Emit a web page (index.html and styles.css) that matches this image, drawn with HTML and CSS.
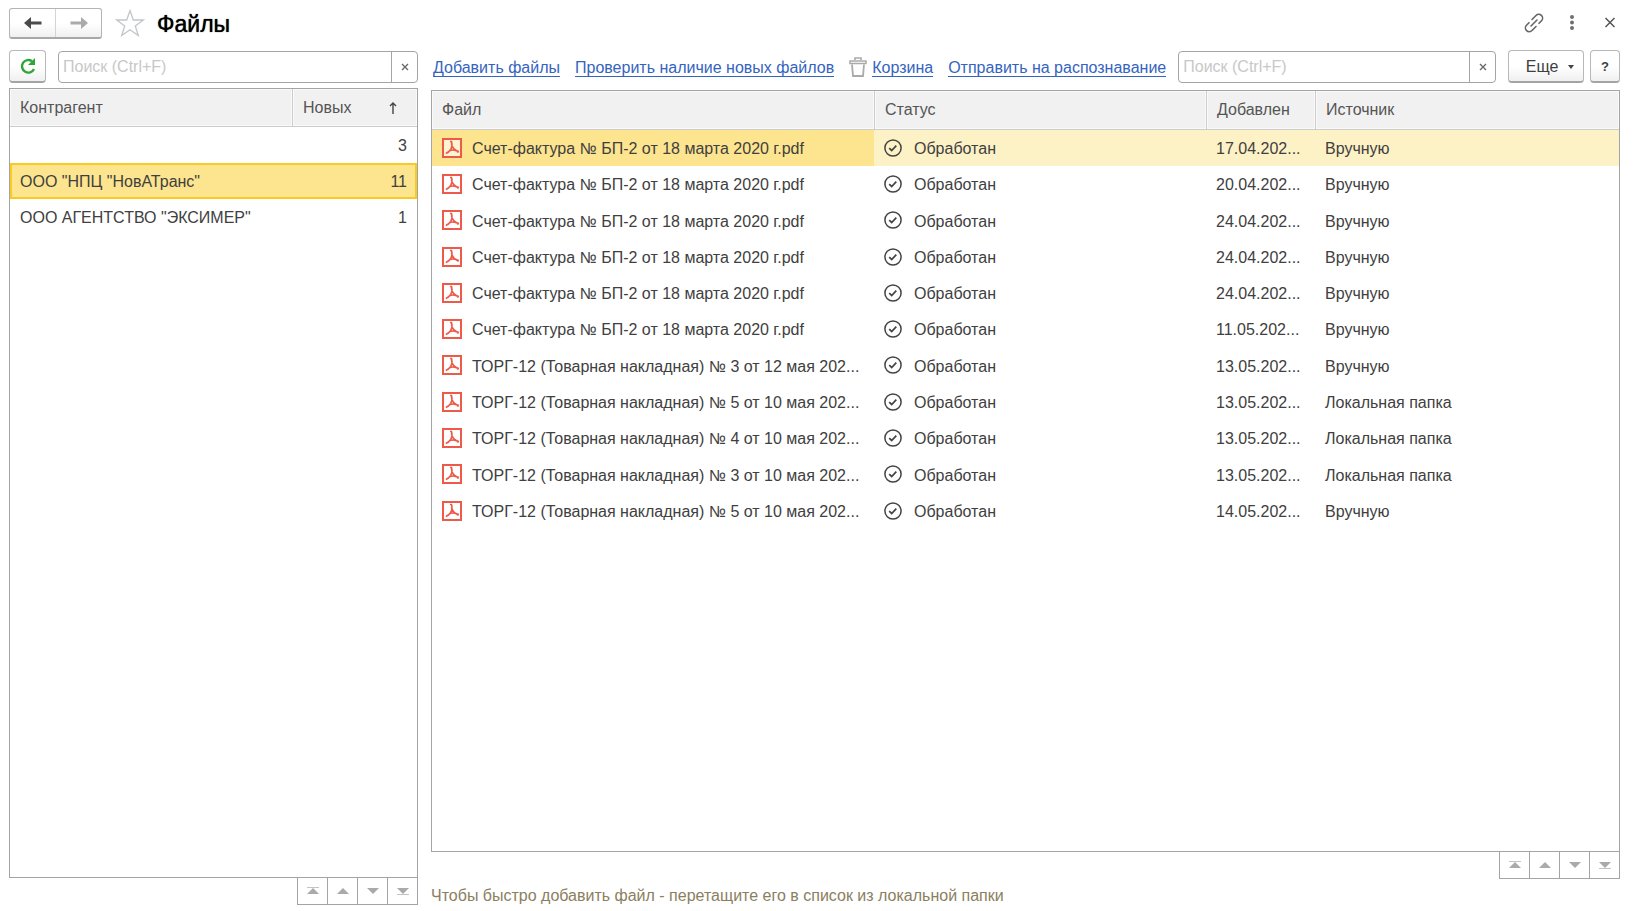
FILE: index.html
```html
<!DOCTYPE html>
<html lang="ru">
<head>
<meta charset="utf-8">
<title>Файлы</title>
<link rel="stylesheet" href="styles.css">
</head>
<body>
<svg class="sprite" aria-hidden="true">
  <symbol id="pdf" viewBox="0 0 20 20"><path d="M1 1h18v18H1z" fill="#fff" fill-opacity=".6" stroke="#ee5a4a" stroke-width="2"/><path d="M8 3.500h1.500c.8 3 .7 5.500-.8 8-1.200 1.700-2.700 3.200-4.900 4M9.500 6c.8 4 3 6.800 7.500 7.500M7.500 12.800c3-1.300 6-1.300 9 1.700" fill="none" stroke="#ee5a4a" stroke-width="1.600"/></symbol>
  <symbol id="done" viewBox="0 0 18 18"><circle cx="9" cy="9" r="8.100" fill="none" stroke="#444" stroke-width="1.500"/><path d="M5.200 9.200l2.500 2.300 4.600-4.800" fill="none" stroke="#444" stroke-width="1.700"/></symbol>
  <symbol id="first" viewBox="0 0 12 8"><path d="M0 0h12v1H0z" fill-opacity=".7"/><path d="M6 1l6 6H0z"/></symbol>
  <symbol id="up" viewBox="0 0 12 8"><path d="M6 1l6 6H0z"/></symbol>
  <symbol id="down" viewBox="0 0 12 8"><path d="M0 1h12L6 7z"/></symbol>
  <symbol id="last" viewBox="0 0 12 8"><path d="M0 7h12v1H0z" fill-opacity=".7"/><path d="M0 1h12L6 7z"/></symbol>
  <symbol id="cross" viewBox="0 0 8 8"><path d="M1 1l6 6M7 1L1 7" fill="none" stroke="#666" stroke-width="1.300"/></symbol>
</svg>
<main class="page">
  <header class="titlebar">
    <div class="history">
      <button type="button" aria-label="Назад"><svg width="18" height="12" viewBox="0 0 18 12"><path d="M0 6l7-6v4.500h10.500v3H7V12z" fill="#4a4a4a"/></svg></button>
      <button type="button" aria-label="Вперед"><svg width="18" height="12" viewBox="0 0 18 12"><path d="M18 6l-7-6v4.500H.5v3H11V12z" fill="#aaa"/></svg></button>
    </div>
    <button type="button" class="star" aria-label="В избранное"><svg width="30" height="28" viewBox="0 0 30 28"><path d="M15 1.500l3.300 9.500h10L20.300 17l3 9.500L15 20.700 6.700 26.500l3-9.500L1.700 11h10z" fill="#fff" stroke="#c0c6cb" stroke-width="1.300"/></svg></button>
    <h1>Файлы</h1>
    <div class="window-tools">
      <button type="button" aria-label="Ссылка"><svg width="20" height="20" viewBox="0 0 20 20" fill="none" stroke="#666" stroke-width="1.600" stroke-linecap="round"><path d="M8 6.500l4-4a3.700 3.700 0 0 1 5.500 5.300L15 10.300M12 13.500l-4 4a3.700 3.700 0 0 1-5.500-5.300L5 9.700M7 13l6-6"/></svg></button>
      <button type="button" aria-label="Меню"><svg width="20" height="20" viewBox="0 0 20 20" fill="#707070"><circle cx="10" cy="4" r="2"/><circle cx="10" cy="9.500" r="2"/><circle cx="10" cy="15" r="2"/></svg></button>
      <button type="button" aria-label="Закрыть"><svg width="20" height="20" viewBox="0 0 20 20"><path d="M5.500 5l9 9M14.500 5l-9 9" stroke="#555" stroke-width="1.500"/></svg></button>
    </div>
  </header>
  <div class="columns">
    <section class="contractors">
      <div class="toolbar">
        <button type="button" class="button refresh" aria-label="Обновить"><svg width="18" height="18" viewBox="0 0 18 18"><path d="M15 12A6.300 6.300 0 1 1 13 4.200" fill="none" stroke="#2fa63a" stroke-width="2.400"/><path d="M16 1v7H9z" fill="#2fa63a"/></svg></button>
        <div class="search"><input type="text" placeholder="Поиск (Ctrl+F)" aria-label="Поиск контрагента"><button type="button" aria-label="Очистить"><svg width="8" height="8"><use href="#cross"/></svg></button></div>
      </div>
      <div class="panel">
        <table class="list">
          <colgroup><col><col class="col-new"></colgroup>
          <thead><tr><th>Контрагент</th><th><span class="sorted">Новых <svg width="8" height="12" viewBox="0 0 8 12"><path d="M4 12V1.500M1 4l3-3 3 3" fill="none" stroke="#444" stroke-width="1.400"/></svg></span></th></tr></thead>
          <tbody>
            <tr><td></td><td class="num">3</td></tr>
            <tr class="current"><td>ООО "НПЦ "НовАТранс"</td><td class="num">11</td></tr>
            <tr><td>ООО АГЕНТСТВО "ЭКСИМЕР"</td><td class="num">1</td></tr>
          </tbody>
        </table>
      </div>
      <div class="pager">
        <button type="button" aria-label="В начало"><svg width="12" height="8"><use href="#first"/></svg></button>
        <button type="button" aria-label="Вверх"><svg width="12" height="8"><use href="#up"/></svg></button>
        <button type="button" aria-label="Вниз"><svg width="12" height="8"><use href="#down"/></svg></button>
        <button type="button" aria-label="В конец"><svg width="12" height="8"><use href="#last"/></svg></button>
      </div>
    </section>
    <section class="files">
      <div class="toolbar">
        <nav class="links">
          <a href="#add">Добавить файлы</a>
          <a href="#check">Проверить наличие новых файлов</a>
          <span class="trash"><svg width="18" height="20" viewBox="0 0 18 20" fill="none" stroke="#aaa"><path d="M6 3V1h6v2" stroke-width="1.600"/><path d="M1 4h16v2.500H1z" stroke-width="1.500"/><path d="M3 7.500l1 11.500h10l1-11.500" stroke-width="1.800"/></svg><a href="#trash">Корзина</a></span>
          <a href="#send">Отправить на распознавание</a>
        </nav>
        <div class="search"><input type="text" placeholder="Поиск (Ctrl+F)" aria-label="Поиск файла"><button type="button" aria-label="Очистить"><svg width="8" height="8"><use href="#cross"/></svg></button></div>
        <button type="button" class="button more">Еще <svg width="6" height="4" viewBox="0 0 6 4"><path d="M0 0h6L3 4z" fill="#444"/></svg></button>
        <button type="button" class="button help">?</button>
      </div>
      <div class="panel">
        <table class="list documents">
          <colgroup><col class="col-file"><col class="col-status"><col class="col-added"><col></colgroup>
          <thead><tr><th>Файл</th><th>Статус</th><th>Добавлен</th><th>Источник</th></tr></thead>
          <tbody></tbody>
        </table>
      </div>
      <div class="pager">
        <button type="button" aria-label="В начало"><svg width="12" height="8"><use href="#first"/></svg></button>
        <button type="button" aria-label="Вверх"><svg width="12" height="8"><use href="#up"/></svg></button>
        <button type="button" aria-label="Вниз"><svg width="12" height="8"><use href="#down"/></svg></button>
        <button type="button" aria-label="В конец"><svg width="12" height="8"><use href="#last"/></svg></button>
      </div>
      <p class="hint">Чтобы быстро добавить файл - перетащите его в список из локальной папки</p>
    </section>
  </div>
</main>
<script src="rows.js"></script>
</body>
</html>
```
FILE: rows.js
```js
const invoice = "Счет-фактура № БП-2 от 18 марта 2020 г.pdf";
const waybill = (number, day) => `ТОРГ-12 (Товарная накладная) № ${number} от ${day} мая 202...`;

const files = [
  [invoice, "17.04.202...", "Вручную"],
  [invoice, "20.04.202...", "Вручную"],
  [invoice, "24.04.202...", "Вручную"],
  [invoice, "24.04.202...", "Вручную"],
  [invoice, "24.04.202...", "Вручную"],
  [invoice, "11.05.202...", "Вручную"],
  [waybill(3, 12), "13.05.202...", "Вручную"],
  [waybill(5, 10), "13.05.202...", "Локальная папка"],
  [waybill(4, 10), "13.05.202...", "Локальная папка"],
  [waybill(3, 10), "13.05.202...", "Локальная папка"],
  [waybill(5, 10), "14.05.202...", "Вручную"],
];

document.querySelector(".documents tbody").innerHTML = files
  .map(([name, added, source], index) => `<tr${index === 0 ? ' class="active"' : ""}>
    <td><svg class="pdf"><use href="#pdf"/></svg>${name}</td>
    <td><svg class="done"><use href="#done"/></svg>Обработан</td>
    <td>${added}</td>
    <td>${source}</td>
  </tr>`)
  .join("");
```
FILE: styles.css
```css
* { box-sizing: border-box; }

body {
  margin: 0;
  background: #fff;
  color: #404040;
  font: 16px/20px "Liberation Sans", Arial, sans-serif;
}

button, input { font: inherit; color: inherit; }

button {
  display: flex;
  align-items: center;
  justify-content: center;
  padding: 0;
  border: 0;
  background: none;
}

svg { display: block; flex: none; }
.sprite { position: absolute; width: 0; height: 0; }

.page {
  display: flex;
  flex-direction: column;
  min-height: 100vh;
  padding: 8px 22px 6px 9px;
}

.titlebar { display: flex; align-items: center; height: 30px; }

.history {
  display: flex;
  width: 93px;
  height: 31px;
  border: 1px solid #b4b4b4;
  border-bottom: 2px solid #a8a8a8;
  border-radius: 3px;
  background: linear-gradient(#fff 50%, #f0f0f0);
}
.history button { flex: 1; }
.history button + button { border-left: 1px solid #d4d4d4; }

.star { margin-left: 13px; }

h1 {
  margin: 0 0 0 12px;
  padding-top: 2px;
  color: #000;
  font-size: 23px;
  line-height: 28px;
  font-weight: 400;
  text-shadow: 0 0 1px #000;
}

.window-tools { display: flex; gap: 18px; margin-left: auto; }

.columns { display: flex; flex: 1; gap: 13px; margin-top: 12px; }
.contractors, .files { display: flex; flex-direction: column; }
.contractors { flex: 0 0 409px; }
.files { flex: 1; min-width: 0; }

.toolbar { display: flex; align-items: center; height: 33px; }
.contractors .toolbar { gap: 12px; margin-bottom: 5px; }
.files .toolbar { margin-bottom: 7px; }

.button {
  height: 33px;
  border: 1px solid #b8b8b8;
  border-bottom: 2px solid #a4a4a4;
  border-radius: 4px;
  background: linear-gradient(#fff 50%, #f0f0f0);
}
.refresh { width: 37px; }
.more { width: 76px; gap: 10px; margin-left: 12px; padding: 2px 0 0 8px; }
.help { width: 30px; margin-left: 6px; padding-top: 2px; font-size: 13px; font-weight: 700; }

.search {
  display: flex;
  flex: 1;
  min-width: 0;
  height: 32px;
  border: 1px solid #a4a4a4;
  border-radius: 4px;
}
.search input {
  flex: 1;
  min-width: 0;
  padding: 1px 4px 0;
  border: 0;
  background: none;
  outline: 0;
}
.search input::placeholder { color: #c8c8c8; opacity: 1; }
.search button { width: 26px; border-left: 1px solid #a4a4a4; }

.links { display: flex; align-items: center; gap: 15px; margin: 0 12px 0 2px; white-space: nowrap; }
.links a { padding-top: 2px; color: #3464c0; text-decoration: none; border-bottom: 1px solid #3464c0; line-height: 17px; }
.trash { display: flex; align-items: center; gap: 5px; }

.panel { flex: 1; border: 1px solid #a4a4a4; }

.list { width: 100%; border-collapse: separate; border-spacing: 0; table-layout: fixed; }
.col-new { width: 125px; }
.col-file { width: 442px; }
.col-status { width: 332px; }
.col-added { width: 109px; }

th {
  height: 38px;
  padding: 0 10px;
  border-bottom: 1px solid #ccc;
  background: #f1f1f1;
  box-shadow: inset 0 0 0 1px #fafafa;
  color: #555;
  font-weight: 400;
  text-align: left;
}
th + th { border-left: 1px solid #ccc; }
.documents th { height: 39px; }
.sorted { display: flex; justify-content: space-between; align-items: center; padding-right: 10px; }

td { height: 36px; padding: 2px 10px 0; overflow: hidden; white-space: nowrap; }
.num { text-align: right; }
.documents { height: 438px; }

.current td { border: solid #f9cb22; border-width: 2px 0; background: #fde48e; }
.current td:first-child { border-left-width: 2px; padding-left: 8px; }
.current td:last-child { border-right-width: 2px; padding-right: 8px; }

.active td { background: #fdf1c6; }
.active td:first-child { background: #fde48e; }

.pdf, .done { display: inline-block; vertical-align: middle; }
.pdf { width: 20px; height: 20px; margin: -4px 10px 0 0; }
.done { width: 18px; height: 18px; margin: -4px 12px 0 0; }

.pager {
  display: flex;
  align-self: flex-end;
  height: 27px;
  border: 1px solid #a4a4a4;
  border-top: 0;
}
.pager button { width: 30px; fill: #aaa; }
.pager button:first-child { width: 29px; }
.pager button + button { border-left: 1px solid #a4a4a4; }

.hint { margin: 8px 0 0; color: #8a8060; line-height: 18px; }
```
